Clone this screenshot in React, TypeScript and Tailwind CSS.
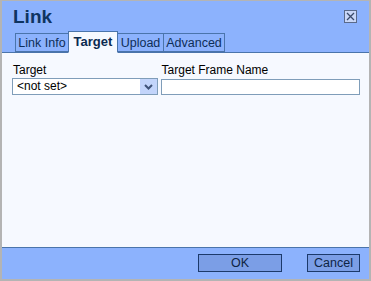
import { useState } from "react";

const tabs = [
  { label: "Link Info", w: "w-[54px]" },
  { label: "Target", w: "w-[50px]" },
  { label: "Upload", w: "w-[47px]" },
  { label: "Advanced", w: "w-[62px]" },
];

export default function App() {
  const [active, setActive] = useState("Target");

  return (
    <div
      className="w-[371px] h-[281px] flex flex-col bg-[#b4b4b4] pt-px px-[2px] pb-[2px] text-[12px] text-black"
      style={{ fontFamily: '"Liberation Sans", Arial, sans-serif' }}
    >
      <div className="bg-[#8cb2fd] relative">
        <div className="h-[30px] pl-[11px] pt-[5px] text-[19px] font-bold text-[#0e3461] leading-[22px]">
          Link
        </div>
        <button className="absolute left-[342px] top-[9px] w-[13px] h-[13px] border border-[#5a6a8a] bg-[#c9d7f8] flex items-center justify-center">
          <svg width="9" height="9" viewBox="0 0 9 9">
            <path d="M1 1 L8 8 M8 1 L1 8" stroke="#3a4a6a" strokeWidth="1.3" />
          </svg>
        </button>
        <div className="flex items-end pl-[13px] border-b border-[#4a74ab] h-[22px]">
          {tabs.map((t) => {
            const on = t.label === active;
            return (
              <button
                key={t.label}
                onClick={() => setActive(t.label)}
                className={`${t.w} -ml-px first:ml-0 border border-[#4a74ab] text-center ${
                  on
                    ? "h-[22px] -mb-px bg-[#f6f9ff] border-b-[#f6f9ff] font-bold text-[13px] text-[#0b2a50] relative z-10"
                    : "h-[19px] bg-[#8cb2fd] text-[12.5px] text-[#0e2e58]"
                }`}
              >
                {t.label}
              </button>
            );
          })}
        </div>
      </div>

      <div className="flex-1 bg-[#f6f9ff] pt-[10px] pl-[10px] pr-[9px] flex gap-[3px] border-b border-[#4a74ab]">
        <div className="w-[146px] flex flex-col">
          <label className="pl-[1px] leading-[15px]">Target</label>
          <div className="h-[17px] border border-[#7f9db9] bg-white flex items-center">
            <span className="flex-1 pl-[4px] leading-[15px]">&lt;not set&gt;</span>
            <span className="w-[17px] h-[15px] bg-[#c3d5fb] flex items-center justify-center">
              <svg width="9" height="6" viewBox="0 0 9 6">
                <path d="M1 1 L4.5 4.5 L8 1" stroke="#3f5378" strokeWidth="2" fill="none" />
              </svg>
            </span>
          </div>
        </div>
        <div className="w-[200px] flex flex-col">
          <label className="pl-[1px] leading-[15px]">Target Frame Name</label>
          <input className="h-[16px] mt-px border border-[#7f9db9] bg-white outline-none" />
        </div>
      </div>

      <div className="h-[31px] bg-[#8cb2fd] flex justify-end items-start pt-[6px] pr-[9px] gap-[25px]">
        <button className="w-[84px] h-[18px] border border-[#1c3a6b] bg-[#7b9ee6] text-[#0e2444] text-[12.5px] leading-[16px]">
          OK
        </button>
        <button className="w-[53px] h-[18px] border border-[#1c3a6b] bg-[#7b9ee6] text-[#0e2444] text-[12.5px] leading-[16px]">
          Cancel
        </button>
      </div>
    </div>
  );
}
